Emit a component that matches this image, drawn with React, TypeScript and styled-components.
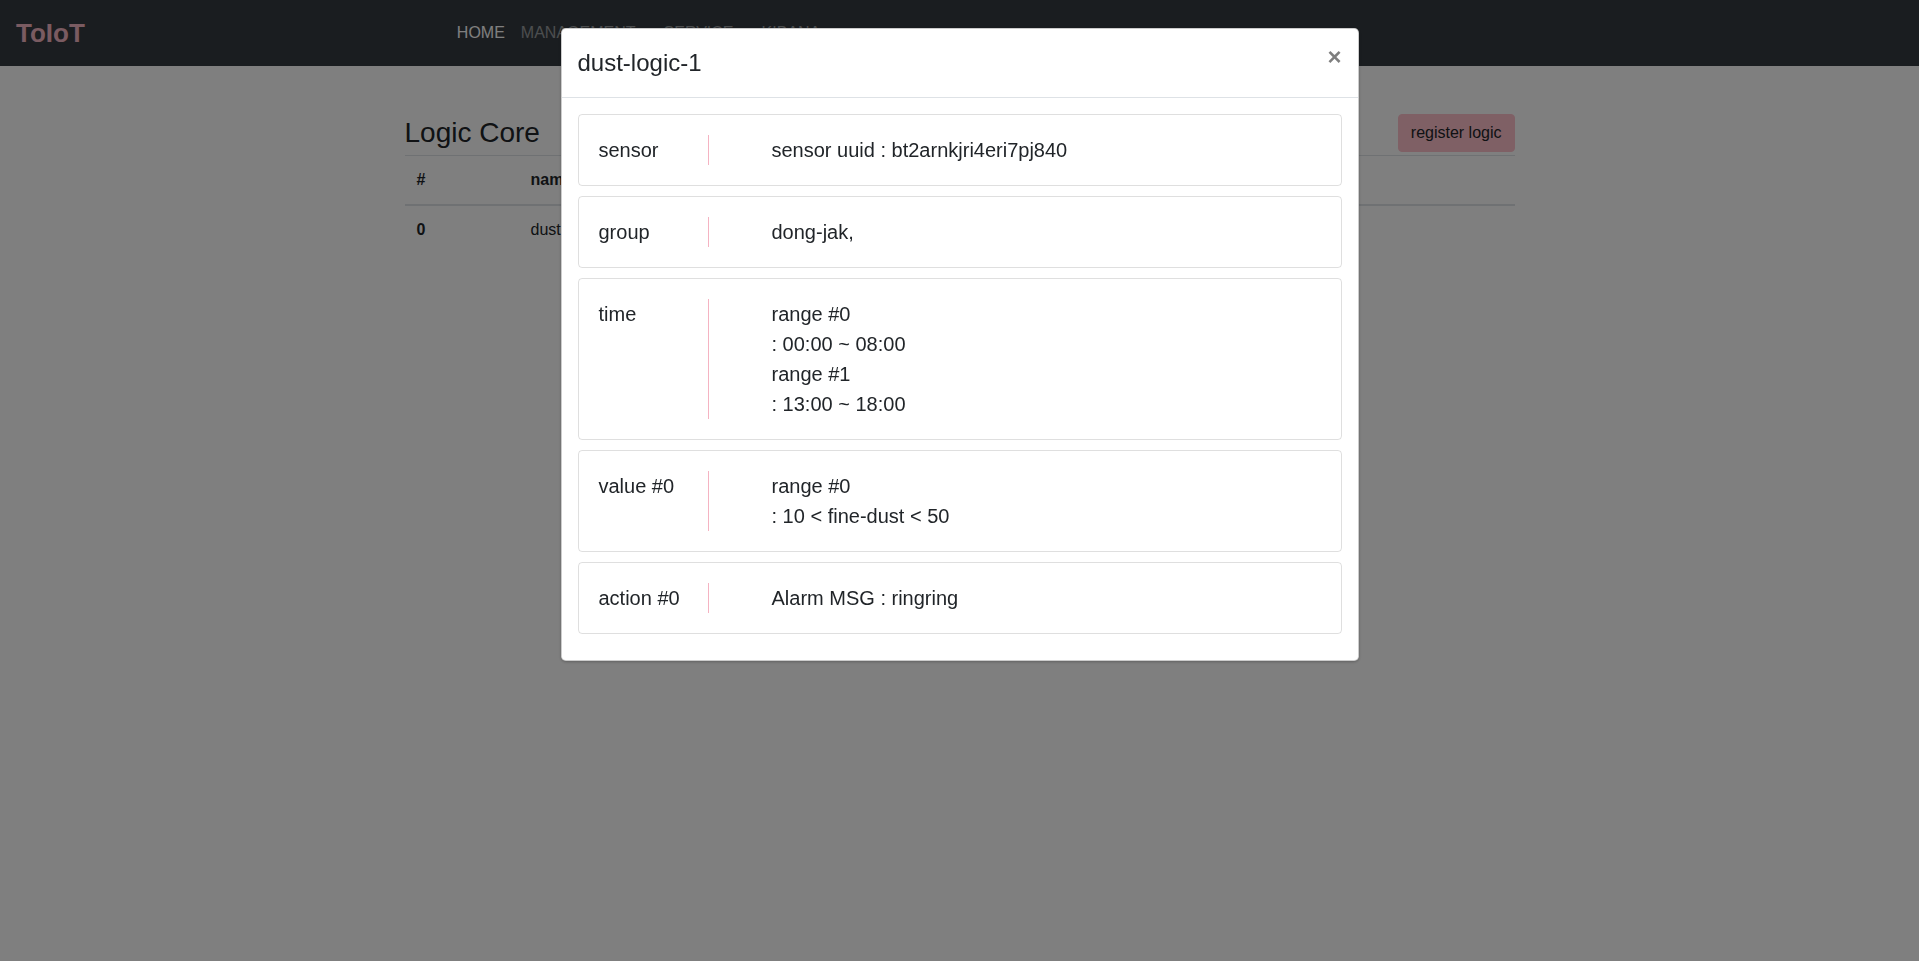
import React from 'react';
import styled, { createGlobalStyle } from 'styled-components';

const GlobalStyle = createGlobalStyle`
  html, body {
    margin: 0;
    padding: 0;
    background: #fff;
    font-family: "Liberation Sans", Arial, sans-serif;
    font-size: 16px;
    line-height: 1.5;
    color: #212529;
    overflow: hidden;
  }
  * {
    box-sizing: border-box;
  }
`;

const Navbar = styled.nav`
  display: flex;
  align-items: center;
  height: 66px;
  padding: 0 16px;
  background: #343a40;
`;

const Brand = styled.a`
  font-size: 26px;
  font-weight: 700;
  color: #f4b6c2;
  line-height: 1.5;
  margin-right: 16px;
`;

const NavList = styled.ul`
  display: flex;
  list-style: none;
  margin: 0 0 0 348px;
  padding: 0;
`;

const NavLink = styled.li<{ $active?: boolean; $dropdown?: boolean }>`
  padding: 8px;
  color: ${(p) => (p.$active ? '#fff' : 'rgba(255, 255, 255, 0.5)')};
  white-space: nowrap;
  &::after {
    content: ${(p) => (p.$dropdown ? "''" : 'none')};
    display: inline-block;
    margin-left: 0.255em;
    vertical-align: 0.255em;
    border-top: 0.3em solid;
    border-right: 0.3em solid transparent;
    border-left: 0.3em solid transparent;
  }
`;

const Container = styled.main`
  width: 1140px;
  margin: 0 auto;
  padding: 48px 15px 0;
`;

const Toolbar = styled.div`
  display: flex;
  align-items: center;
  justify-content: space-between;
  margin-bottom: 3px;
`;

const PageTitle = styled.h3`
  margin: 0;
  font-size: 28px;
  font-weight: 500;
  line-height: 1.2;
`;

const PinkButton = styled.button`
  font-family: inherit;
  font-size: 16px;
  line-height: 1.5;
  padding: 6px 12px;
  color: #212529;
  background: #ffc0cb;
  border: 1px solid #ffc0cb;
  border-radius: 4px;
`;

const Table = styled.table`
  width: 100%;
  border-collapse: collapse;
  th, td {
    padding: 12px;
    text-align: left;
    vertical-align: top;
    border-top: 1px solid #dee2e6;
  }
  thead th {
    border-bottom: 2px solid #dee2e6;
  }
  tbody th {
    color: #212529;
  }
`;

const Backdrop = styled.div`
  position: fixed;
  inset: 0;
  background: rgba(0, 0, 0, 0.5);
`;

const ModalWrap = styled.div`
  position: fixed;
  inset: 0;
  overflow: auto;
`;

const Dialog = styled.div`
  width: 798px;
  margin: 28px auto;
  background: #fff;
  border: 1px solid rgba(0, 0, 0, 0.2);
  border-radius: 4.8px;
  box-shadow: 0 1px 3px rgba(0, 0, 0, 0.25);
`;

const ModalHeader = styled.div`
  display: flex;
  align-items: flex-start;
  padding: 16px;
  border-bottom: 1px solid #dee2e6;
`;

const ModalTitle = styled.h4`
  margin: 0;
  font-size: 24px;
  font-weight: 500;
  line-height: 1.5;
`;

const Close = styled.button`
  margin: -16px -16px -16px auto;
  padding: 16px;
  background: transparent;
  border: 0;
  font-family: inherit;
  font-size: 24px;
  font-weight: 700;
  line-height: 1;
  color: #000;
  opacity: 0.5;
  text-shadow: 0 1px 0 #fff;
`;

const ModalBody = styled.div`
  padding: 16px;
`;

const InfoCard = styled.div`
  display: flex;
  padding: 20px;
  margin-bottom: 10px;
  border: 1px solid rgba(0, 0, 0, 0.125);
  border-radius: 4px;
  font-size: 20px;
  line-height: 30px;
`;

const Label = styled.div`
  flex: 0 0 110px;
  border-right: 1px solid #f5b3c2;
`;

const Value = styled.div`
  flex: 1;
  padding-left: 63px;
`;

const rows: { label: string; lines: string[] }[] = [
  { label: 'sensor', lines: ['sensor uuid : bt2arnkjri4eri7pj840'] },
  { label: 'group', lines: ['dong-jak,'] },
  { label: 'time', lines: ['range #0', ': 00:00 ~ 08:00', 'range #1', ': 13:00 ~ 18:00'] },
  { label: 'value #0', lines: ['range #0', ': 10 < fine-dust < 50'] },
  { label: 'action #0', lines: ['Alarm MSG : ringring'] },
];

export default function App() {
  return (
    <>
      <GlobalStyle />
      <Navbar>
        <Brand>ToIoT</Brand>
        <NavList>
          <NavLink $active>HOME</NavLink>
          <NavLink $dropdown>MANAGEMENT</NavLink>
          <NavLink $dropdown>SERVICE</NavLink>
          <NavLink $dropdown>KIBANA</NavLink>
        </NavList>
      </Navbar>
      <Container>
        <Toolbar>
          <PageTitle>Logic Core</PageTitle>
          <PinkButton>register logic</PinkButton>
        </Toolbar>
        <Table>
          <thead>
            <tr>
              <th style={{ width: 114 }}>#</th>
              <th style={{ width: 300 }}>name</th>
              <th style={{ width: 300 }}>sensor</th>
              <th>group</th>
            </tr>
          </thead>
          <tbody>
            <tr>
              <th>0</th>
              <td>dust-logic-1</td>
              <td>bt2arnkjri4eri7pj840</td>
              <td>dong-jak,</td>
            </tr>
          </tbody>
        </Table>
      </Container>
      <Backdrop />
      <ModalWrap>
        <Dialog>
          <ModalHeader>
            <ModalTitle>dust-logic-1</ModalTitle>
            <Close>×</Close>
          </ModalHeader>
          <ModalBody>
            {rows.map((r) => (
              <InfoCard key={r.label}>
                <Label>{r.label}</Label>
                <Value>
                  {r.lines.map((l) => (
                    <div key={l}>{l}</div>
                  ))}
                </Value>
              </InfoCard>
            ))}
          </ModalBody>
        </Dialog>
      </ModalWrap>
    </>
  );
}
